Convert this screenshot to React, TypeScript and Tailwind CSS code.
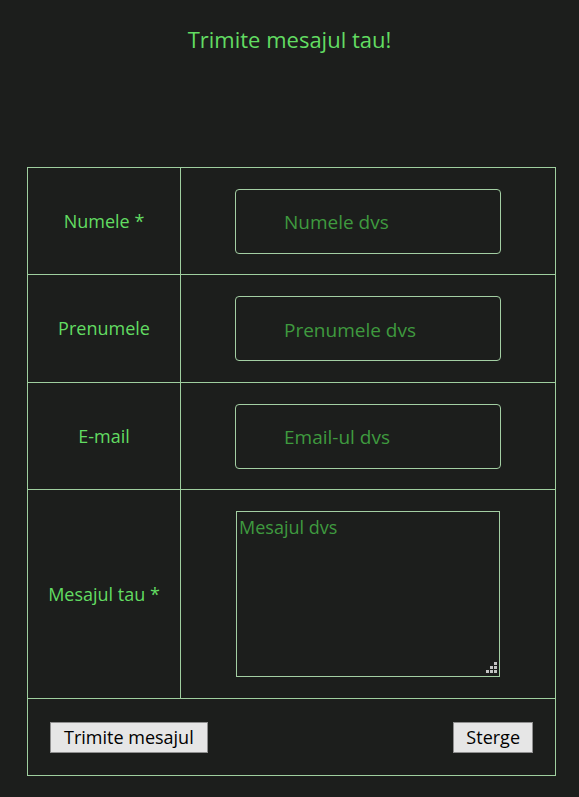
import React, { useState } from 'react'

const labelCls = 'border border-[#9fcf9f] text-center align-middle text-[18px] text-[#62dc62] font-normal'
const cellCls = 'border border-[#9fcf9f] align-middle'
const inputCls =
    'mx-auto block h-[65px] w-[266px] rounded-[4px] border border-[#a3cfa3] bg-transparent pl-[48px] pt-[2px] text-[19px] text-[#62dc62] outline-none placeholder:text-[#3f9a3f]'

function ResizeGrip() {
    return (
        <svg width="11" height="11" viewBox="0 0 11 11" className="pointer-events-none absolute bottom-[4px] right-[3px]">
            <rect x="8" y="0" width="3" height="3" fill="#c4c4c4" />
            <rect x="4" y="4" width="3" height="3" fill="#c4c4c4" />
            <rect x="8" y="4" width="3" height="3" fill="#c4c4c4" />
            <rect x="0" y="8" width="3" height="3" fill="#c4c4c4" />
            <rect x="4" y="8" width="3" height="3" fill="#c4c4c4" />
            <rect x="8" y="8" width="3" height="3" fill="#c4c4c4" />
        </svg>
    )
}

export default function App() {
    const [nume, setNume] = useState('')
    const [prenume, setPrenume] = useState('')
    const [email, setEmail] = useState('')
    const [mesaj, setMesaj] = useState('')

    const reset = () => {
        setNume('')
        setPrenume('')
        setEmail('')
        setMesaj('')
    }

    return (
        <div className="min-h-[797px] bg-[#1c1e1c] pb-[22px] font-['Open_Sans',sans-serif]">
            <h1 className="pt-[24px] text-center text-[22px] leading-[31px] text-[#62dc62]">Trimite mesajul tau!</h1>
            <form className="mt-[112px]" onSubmit={(e) => e.preventDefault()}>
                <table className="ml-[27px] w-[529px] border-collapse border border-[#9fcf9f]">
                    <tbody>
                        <tr className="h-[107px]">
                            <th className={`${labelCls} w-[153px]`}>Numele *</th>
                            <td className={cellCls}>
                                <input className={inputCls} placeholder="Numele dvs" value={nume} onChange={(e) => setNume(e.target.value)} />
                            </td>
                        </tr>
                        <tr className="h-[108px]">
                            <th className={labelCls}>Prenumele</th>
                            <td className={cellCls}>
                                <input className={inputCls} placeholder="Prenumele dvs" value={prenume} onChange={(e) => setPrenume(e.target.value)} />
                            </td>
                        </tr>
                        <tr className="h-[107px]">
                            <th className={labelCls}>E-mail</th>
                            <td className={cellCls}>
                                <input className={inputCls} placeholder="Email-ul dvs" value={email} onChange={(e) => setEmail(e.target.value)} />
                            </td>
                        </tr>
                        <tr className="h-[209px]">
                            <th className={labelCls}>Mesajul tau *</th>
                            <td className={cellCls}>
                                <div className="relative mx-auto h-[166px] w-[264px]">
                                    <textarea
                                        className="block h-full w-full resize-none border border-[#a3cfa3] bg-transparent px-[2px] py-[3px] text-[18px] leading-[24px] text-[#62dc62] outline-none placeholder:text-[#3f9a3f]"
                                        placeholder="Mesajul dvs"
                                        value={mesaj}
                                        onChange={(e) => setMesaj(e.target.value)}
                                    />
                                    <ResizeGrip />
                                </div>
                            </td>
                        </tr>
                        <tr className="h-[77px]">
                            <td colSpan={2} className={cellCls}>
                                <div className="flex items-center justify-between px-[22px]">
                                    <button type="submit" className="h-[31px] border border-[#8f8f8f] bg-[#e6e6e6] px-[13px] text-[18px] text-black">
                                        Trimite mesajul
                                    </button>
                                    <button type="button" onClick={reset} className="h-[31px] border border-[#8f8f8f] bg-[#e6e6e6] px-[12px] text-[18px] text-black">
                                        Sterge
                                    </button>
                                </div>
                            </td>
                        </tr>
                    </tbody>
                </table>
            </form>
        </div>
    )
}
